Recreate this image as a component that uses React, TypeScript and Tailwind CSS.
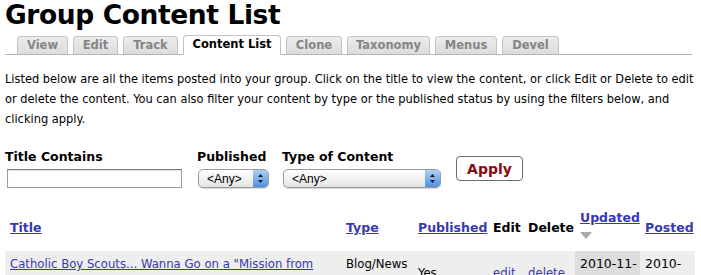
import React from 'react';

const tabs = [
  { label: 'View', w: 'w-[51px]' },
  { label: 'Edit', w: 'w-[45px]' },
  { label: 'Track', w: 'w-[55px]' },
  { label: 'Content List', w: 'w-[98px]' },
  { label: 'Clone', w: 'w-[56px]' },
  { label: 'Taxonomy', w: 'w-[83px]' },
  { label: 'Menus', w: 'w-[62px]' },
  { label: 'Devel', w: 'w-[57px]' },
];

const SelectBox = ({ width }: { width: string }) => (
  <div className={`${width} h-[19px] flex items-center rounded-[5px] border border-[#9a9a9a] bg-gradient-to-b from-white to-[#e4e4e4] shadow-[0_1px_1px_rgba(0,0,0,0.15)]`}>
    <span className="flex-1 pl-[8px] text-[12px] leading-none font-['Liberation_Sans',sans-serif] text-black">&lt;Any&gt;</span>
    <span className="w-[15px] h-[17px] rounded-r-[4px] bg-gradient-to-b from-[#aed0f6] to-[#4a90e2] flex items-center justify-center">
      <svg width="7" height="11" viewBox="0 0 7 11">
        <path d="M3.5 1 L6 4 L1 4 Z" fill="#1a1a1a" />
        <path d="M3.5 10 L6 7 L1 7 Z" fill="#1a1a1a" />
      </svg>
    </span>
  </div>
);

export default function App() {
  return (
    <div className="w-[701px] h-[275px] overflow-hidden bg-white px-[5px] text-black font-['DejaVu_Sans_Condensed','DejaVu_Sans',sans-serif]">
      <h1 className="text-[26.5px] leading-[30px] font-bold font-['DejaVu_Sans',sans-serif] tracking-[-0.4px] text-black">Group Content List</h1>

      {/* tabs */}
      <div className="mt-[5px] flex items-end gap-[5px] pl-[12px] border-b border-[#b5b5b5] w-[687px] h-[20px]">
        {tabs.map((t) => {
          const active = t.label === 'Content List';
          return (
            <div
              key={t.label}
              className={`${t.w} shrink-0 rounded-t-[4px] border border-b-0 border-[#c4c4c4] text-[11.5px] font-bold font-['DejaVu_Sans',sans-serif] leading-none flex items-center justify-center ${
                active
                  ? 'h-[20px] bg-white text-black mb-[-1px] pb-[1px]'
                  : 'h-[18px] bg-gradient-to-b from-[#ececec] to-[#dcdcdc] text-[#858585]'
              }`}
            >
              {t.label}
            </div>
          );
        })}
      </div>

      <p className="mt-[14px] text-[12.7px] leading-[20px] w-[694px]">
        Listed below are all the items posted into your group. Click on the title to view the content, or click Edit or Delete to edit or delete the content. You can also filter your content by type or the published status by using the filters below, and clicking apply.
      </p>

      {/* filters */}
      <div className="mt-[20px] flex items-start font-['DejaVu_Sans',sans-serif]">
        <div className="w-[192px]">
          <div className="text-[12.5px] font-bold leading-[16px]">Title Contains</div>
          <div className="mt-[4px] ml-[2px] w-[175px] h-[19px] border border-[#9c9c9c] border-t-[#7a7a7a] bg-white shadow-[inset_0_1px_1px_rgba(0,0,0,0.12)]" />
        </div>
        <div className="w-[85px]">
          <div className="text-[12.5px] font-bold leading-[16px]">Published</div>
          <div className="mt-[4px] ml-[1px]">
            <SelectBox width="w-[71px]" />
          </div>
        </div>
        <div className="w-[174px]">
          <div className="text-[12.5px] font-bold leading-[16px]">Type of Content</div>
          <div className="mt-[4px] ml-[1px]">
            <SelectBox width="w-[158px]" />
          </div>
        </div>
        <button className="mt-[7px] w-[67px] h-[25px] rounded-[4px] border border-[#6a6a6a] bg-white text-[14px] font-bold text-[#8b0a14] leading-none">
          Apply
        </button>
      </div>

      {/* table */}
      <table className="mt-[17px] w-[690px] border-collapse table-fixed text-[13px]">
        <thead>
          <tr className="h-[46px] font-['DejaVu_Sans',sans-serif] text-[12.5px] font-bold">
            <th className="w-[336px] text-left pl-[5px] align-middle"><span className="text-[#3838b0] underline">Title</span></th>
            <th className="w-[72px] text-left pl-[5px]"><span className="text-[#3838b0] underline">Type</span></th>
            <th className="w-[75px] text-left pl-[5px]"><span className="text-[#3838b0] underline">Published</span></th>
            <th className="w-[35px] text-left pl-[5px]">Edit</th>
            <th className="w-[52px] text-left pl-[5px]">Delete</th>
            <th className="w-[65px] text-left pl-[5px] align-top pt-[4px]">
              <span className="text-[#3838b0] underline leading-[18px]">Updated</span>
              <svg className="mt-[4px] block" width="12" height="7" viewBox="0 0 12 7"><path d="M0 0 H12 L6 7 Z" fill="#aaaaaa" /></svg>
            </th>
            <th className="text-left pl-[5px]"><span className="text-[#3838b0] underline">Posted</span></th>
          </tr>
        </thead>
        <tbody>
          <tr className="bg-[#eeeeee] leading-[18px]">
            <td className="pl-[5px] pr-[10px] pt-[4px] align-top"><span className="text-[#3838b0] underline">Catholic Boy Scouts... Wanna Go on a "Mission from God"?</span></td>
            <td className="pl-[5px] pt-[4px] align-top">Blog/News</td>
            <td className="pl-[5px] pt-[13px] align-top">Yes</td>
            <td className="pl-[5px] pt-[13px] align-top text-[#3838b0]">edit</td>
            <td className="pl-[5px] pt-[13px] align-top text-[#3838b0]">delete</td>
            <td className="pl-[5px] pt-[4px] align-top bg-[#dddddd] text-[12.5px] font-['DejaVu_Sans',sans-serif]">2010-11-<br />04</td>
            <td className="pl-[5px] pt-[4px] align-top text-[12.5px] font-['DejaVu_Sans',sans-serif]">2010-<br />11-04</td>
          </tr>
        </tbody>
      </table>
    </div>
  );
}
